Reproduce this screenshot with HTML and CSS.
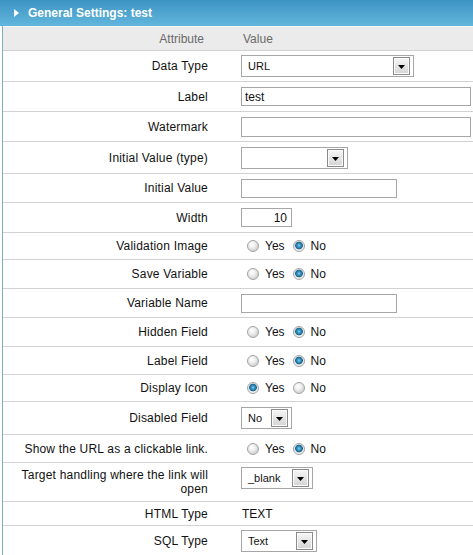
FILE: index.html
```html
<!DOCTYPE html>
<html>
<head>
<meta charset="utf-8">
<title>General Settings</title>
<link rel="stylesheet" href="styles.css">
</head>
<body>
<div class="titlebar"><span class="tri"></span><span class="title">General Settings: test</span></div>
<div class="panel">
  <div class="row head">
    <div class="lab">Attribute</div>
    <div class="val">Value</div>
  </div>
  <div class="row h30">
    <div class="lab">Data Type</div>
    <div class="val"><div class="sel w173"><span class="sel-text">URL</span><span class="sel-btn"><svg width="7" height="4" viewBox="0 0 7 4"><polygon points="0,0 7,0 3.5,4" fill="#000"/></svg></span></div></div>
  </div>
  <div class="row h29">
    <div class="lab">Label</div>
    <div class="val"><input class="txt full" type="text" value="test"></div>
  </div>
  <div class="row h29">
    <div class="lab">Watermark</div>
    <div class="val"><input class="txt full tall" type="text" value=""></div>
  </div>
  <div class="row h31">
    <div class="lab">Initial Value (type)</div>
    <div class="val"><div class="sel w107"><span class="sel-text"></span><span class="sel-btn"><svg width="7" height="4" viewBox="0 0 7 4"><polygon points="0,0 7,0 3.5,4" fill="#000"/></svg></span></div></div>
  </div>
  <div class="row h28">
    <div class="lab">Initial Value</div>
    <div class="val"><input class="txt mid" type="text" value=""></div>
  </div>
  <div class="row h29">
    <div class="lab">Width</div>
    <div class="val"><input class="txt small num" type="text" value="10"></div>
  </div>
  <div class="row h26">
    <div class="lab">Validation Image</div>
    <div class="val"><span class="radios"><input type="radio" class="rd" name="vi"><span class="rl">Yes</span><input type="radio" class="rd" name="vi" checked><span class="rl">No</span></span></div>
  </div>
  <div class="row h28">
    <div class="lab">Save Variable</div>
    <div class="val"><span class="radios"><input type="radio" class="rd" name="sv"><span class="rl">Yes</span><input type="radio" class="rd" name="sv" checked><span class="rl">No</span></span></div>
  </div>
  <div class="row h28">
    <div class="lab">Variable Name</div>
    <div class="val"><input class="txt mid" type="text" value=""></div>
  </div>
  <div class="row h28">
    <div class="lab">Hidden Field</div>
    <div class="val"><span class="radios"><input type="radio" class="rd" name="hf"><span class="rl">Yes</span><input type="radio" class="rd" name="hf" checked><span class="rl">No</span></span></div>
  </div>
  <div class="row h27">
    <div class="lab">Label Field</div>
    <div class="val"><span class="radios"><input type="radio" class="rd" name="lf"><span class="rl">Yes</span><input type="radio" class="rd" name="lf" checked><span class="rl">No</span></span></div>
  </div>
  <div class="row h26">
    <div class="lab">Display Icon</div>
    <div class="val"><span class="radios"><input type="radio" class="rd" name="di" checked><span class="rl">Yes</span><input type="radio" class="rd" name="di"><span class="rl">No</span></span></div>
  </div>
  <div class="row h32">
    <div class="lab">Disabled Field</div>
    <div class="val"><div class="sel w51"><span class="sel-text">No</span><span class="sel-btn"><svg width="7" height="4" viewBox="0 0 7 4"><polygon points="0,0 7,0 3.5,4" fill="#000"/></svg></span></div></div>
  </div>
  <div class="row h27">
    <div class="lab">Show the URL as a clickable link.</div>
    <div class="val"><span class="radios"><input type="radio" class="rd" name="su"><span class="rl">Yes</span><input type="radio" class="rd" name="su" checked><span class="rl">No</span></span></div>
  </div>
  <div class="row h38">
    <div class="lab two">Target handling where the link will open</div>
    <div class="val top"><div class="sel w72"><span class="sel-text">_blank</span><span class="sel-btn"><svg width="7" height="4" viewBox="0 0 7 4"><polygon points="0,0 7,0 3.5,4" fill="#000"/></svg></span></div></div>
  </div>
  <div class="row h23">
    <div class="lab">HTML Type</div>
    <div class="val plain">TEXT</div>
  </div>
  <div class="row h29 last">
    <div class="lab">SQL Type</div>
    <div class="val"><div class="sel w76"><span class="sel-text">Text</span><span class="sel-btn"><svg width="7" height="4" viewBox="0 0 7 4"><polygon points="0,0 7,0 3.5,4" fill="#000"/></svg></span></div></div>
  </div>
</div>
</body>
</html>
```
FILE: styles.css
```css
html, body {
  margin: 0;
  padding: 0;
  background: #fff;
  overflow: hidden;
}
body {
  font-family: "Liberation Sans", Arial, sans-serif;
  font-size: 12px;
  color: #111;
}
.titlebar {
  height: 26px;
  background: linear-gradient(#3c94c2, #62b6dd);
  display: flex;
  align-items: center;
  padding-left: 14px;
  box-sizing: border-box;
}
.tri {
  width: 0;
  height: 0;
  border-left: 5px solid #fff;
  border-top: 4px solid transparent;
  border-bottom: 4px solid transparent;
  margin-right: 9px;
  margin-top: -1px;
}
.title {
  color: #fff;
  font-weight: bold;
  font-size: 12px;
}
.panel {
  margin-left: 2px;
  border-left: 1px solid #7eaec4;
}
.row {
  display: grid;
  grid-template-columns: 230px 1fr;
  align-items: center;
  border-bottom: 1px solid #d2d2d2;
}
.row.last {
  border-bottom: none;
}
.lab {
  text-align: right;
  padding: 0 25px 0 8px;
  line-height: 14px;
  letter-spacing: 0.2px;
}
.val {
  padding: 0 2px 0 8px;
  display: flex;
  align-items: center;
}
.val.top {
  align-self: start;
  padding-top: 4px;
}
.val.plain {
  padding-left: 9px;
}
.head {
  height: 23px;
  background: #ebebeb;
  border-top: 1px solid #f6f8f6;
  color: #6a6a6a;
}
.head .lab {
  padding-right: 29px;
  letter-spacing: 0;
}
.head .val {
  padding-left: 10px;
}
.h23 { height: 23px; }
.h26 { height: 26px; }
.h27 { height: 27px; }
.h28 { height: 28px; }
.h29 { height: 29px; }
.h30 { height: 30px; }
.h31 { height: 31px; }
.h32 { height: 32px; }
.h38 { height: 38px; }

.txt {
  box-sizing: border-box;
  height: 19px;
  border: 1px solid #a6a6a6;
  padding: 0 3px;
  margin: 0;
  font-family: "Liberation Sans", Arial, sans-serif;
  font-size: 12px;
  color: #111;
  background: #fff;
  outline: none;
}
.txt.tall { height: 20px; }
.full { width: 100%; }
.mid { width: 156px; }
.small { width: 51px; }
.num { text-align: right; padding-right: 4px; }

.sel {
  box-sizing: border-box;
  height: 22px;
  border: 1px solid #a6a6a6;
  background: #fff;
  display: flex;
  align-items: center;
  justify-content: space-between;
  font-size: 11px;
  color: #111;
}
.sel-text {
  padding-left: 6px;
}
.w173 { width: 173px; }
.w107 { width: 107px; }
.w51 { width: 51px; }
.w72 { width: 72px; }
.w76 { width: 76px; }
.sel-btn {
  box-sizing: border-box;
  width: 17px;
  height: 18px;
  margin-right: 3px;
  border: 1px solid #8a8a8a;
  background: linear-gradient(#f6f6f6, #d4d4d4);
  box-shadow: inset 0 0 0 1px #fbfbfb;
  display: flex;
  align-items: center;
  justify-content: center;
}
.sel-btn svg {
  display: block;
  margin-top: 2px;
}

.radios {
  display: flex;
  align-items: center;
  padding-left: 6px;
}
.rd {
  appearance: none;
  -webkit-appearance: none;
  box-sizing: border-box;
  width: 12px;
  height: 12px;
  margin: 0;
  border: 1px solid #a3a3a3;
  border-radius: 50%;
  background: radial-gradient(circle at 40% 35%, #ffffff 0, #f0f0f0 3px, #d6d6d6 6px);
}
.rd:checked {
  background: radial-gradient(circle at 50% 45%, #9ad6f2 0, #3a98c6 1.5px, #1b6792 3.5px, #e6e6e6 4.2px, #fafafa 6px);
}
.rl {
  margin-left: 6px;
  margin-right: 8px;
}
```
